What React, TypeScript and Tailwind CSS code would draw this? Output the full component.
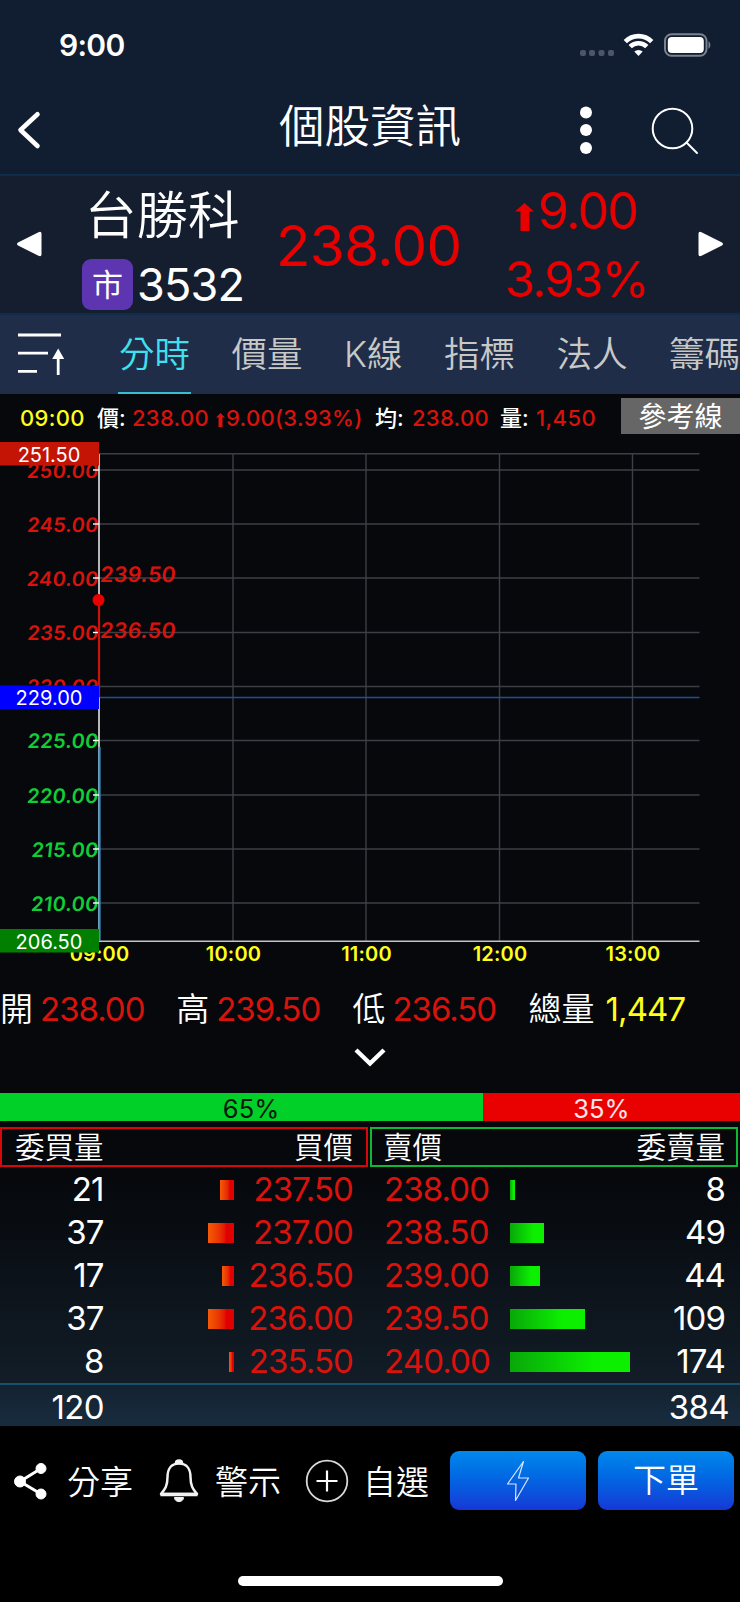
import type { ReactNode } from "react";

const FONT = "font-['Inter','Noto_Sans_CJK_TC',sans-serif]";

const tabs = ["分時", "價量", "K線", "指標", "法人", "籌碼"];

const priceTicks = [
  { label: "250.00", y: 35, up: true },
  { label: "245.00", y: 89, up: true },
  { label: "240.00", y: 143, up: true },
  { label: "235.00", y: 197.5, up: true },
  { label: "230.00", y: 251.5, up: true },
  { label: "225.00", y: 305.5, up: false },
  { label: "220.00", y: 360, up: false },
  { label: "215.00", y: 414, up: false },
  { label: "210.00", y: 468, up: false },
];

const timeTicks = [
  { label: "09:00", x: 99 },
  { label: "10:00", x: 233 },
  { label: "11:00", x: 366 },
  { label: "12:00", x: 499.5 },
  { label: "13:00", x: 632.5 },
];

const priceTags = [
  { label: "251.50", y: 7, fill: "#c41405" },
  { label: "229.00", y: 250.5, fill: "#0000ff" },
  { label: "206.50", y: 494, fill: "#007f00" },
];

const stats = [
  { label: "開", value: "238.00" },
  { label: "高", value: "239.50" },
  { label: "低", value: "236.50" },
];

const bids = [
  { qty: 21, price: "237.50", bar: 14.5 },
  { qty: 37, price: "237.00", bar: 26 },
  { qty: 17, price: "236.50", bar: 12 },
  { qty: 37, price: "236.00", bar: 26 },
  { qty: 8, price: "235.50", bar: 5.5 },
];

const asks = [
  { qty: 8, price: "238.00", bar: 5 },
  { qty: 49, price: "238.50", bar: 34 },
  { qty: 44, price: "239.00", bar: 30 },
  { qty: 109, price: "239.50", bar: 75 },
  { qty: 174, price: "240.00", bar: 120 },
];

function StatusBar() {
  return (
    <div className="flex h-[90px] items-center justify-between pl-[59px] pr-7">
      <span className="text-[30px] font-semibold leading-none tracking-[-0.7px]">9:00</span>
      <svg width="134" height="26" viewBox="0 0 134 26" fill="none">
        <g fill="#4d5666">
          <rect x="2" y="18" width="6" height="6" rx="2" />
          <rect x="11" y="18" width="6" height="6" rx="2" />
          <rect x="20.5" y="18" width="6" height="6" rx="2" />
          <rect x="30" y="18" width="6" height="6" rx="2" />
        </g>
        <g stroke="#fff" strokeWidth="4.6">
          <path d="M47.3 9.6a18.6 18.6 0 0 1 26.4 0" />
          <path d="M52.2 14.6a11.8 11.8 0 0 1 16.6 0" />
        </g>
        <path d="M60.5 24l-4.2-4.4a6.2 6.2 0 0 1 8.4 0z" fill="#fff" />
        <rect x="87" y="2.2" width="41.5" height="21.6" rx="6.5" stroke="#7b828e" strokeWidth="2" />
        <rect x="89.8" y="5" width="36" height="16" rx="4" fill="#fff" />
        <path d="M130.5 9.3c2.4.9 2.4 6.5 0 7.4z" fill="#7b828e" />
      </svg>
    </div>
  );
}

function NavBar() {
  return (
    <div className="flex h-[84px] items-center">
      <svg width="60" height="84" viewBox="0 0 60 84" fill="none" stroke="#fff" strokeWidth="4.6" strokeLinecap="round" strokeLinejoin="round">
        <path d="M37.5 24.3L20.5 40l17 16" />
      </svg>
      <h1 className="ml-[219px] mt-[-10px] w-[184px] whitespace-nowrap text-[45.5px] font-[350] leading-none">個股資訊</h1>
      <svg className="ml-auto" width="170" height="84" viewBox="0 0 170 84" fill="none">
        <g fill="#fff">
          <circle cx="16" cy="22.5" r="6" />
          <circle cx="16" cy="40" r="6" />
          <circle cx="16" cy="58" r="6" />
        </g>
        <g stroke="#fff" strokeWidth="2" strokeLinecap="round">
          <circle cx="102.5" cy="38.5" r="19.8" />
          <path d="M116.5 52.5l10.5 10.5" />
        </g>
      </svg>
    </div>
  );
}

function Quote() {
  return (
    <section className="flex h-[141px] border-y-2 border-[#0e2c4b] bg-[#141e2e]">
      <svg className="mt-[55px] ml-4 shrink-0" width="26" height="26" viewBox="0 0 26 26" fill="#fff">
        <path d="M2 11.4L22.5 1.2q3-1.2 3 1.5v20.6q0 2.7-3 1.5L2 14.6q-2-1.6 0-3.2z" />
      </svg>
      <div className="ml-10 w-[190px]">
        <div className="mt-3 ml-[3px] whitespace-nowrap text-[51.5px] font-[350] leading-[54px]">台勝科</div>
        <div className="mt-[17px] flex items-center">
          <span className="grid h-[51px] w-[51px] place-items-center rounded-[9px] bg-[#5e35b1] text-[31px] leading-none">市</span>
          <span className="ml-1 text-[45px] leading-none tracking-[-0.8px]">3532</span>
        </div>
      </div>
      <div className="ml-[4px] mt-[41px] w-[201px] whitespace-nowrap text-[56.5px] leading-[58px] tracking-[-0.6px] text-[#e80000]">238.00</div>
      <div className="ml-[28px] w-[160px] whitespace-nowrap text-[50px] text-[#e80000]">
        <div className="mt-[10px] flex h-[50px] items-center pl-[10px] leading-none">
          <svg className="mt-3 mr-1" width="19" height="28" viewBox="0 0 19 28" fill="#e80000">
            <path d="M9.5 0L19 8.5h-4.5V28h-9V8.5H0z" />
          </svg>
          <span className="tracking-[-1.6px]">9.00</span>
        </div>
        <div className="mt-[19px] text-[49px] leading-[50px] tracking-[-1.7px]">3.93%</div>
      </div>
      <svg className="mt-[55px] mr-4 ml-auto shrink-0" width="26" height="26" viewBox="0 0 26 26" fill="#fff">
        <path d="M24 11.4L3.5 1.2q-3-1.2-3 1.5v20.6q0 2.7 3 1.5L24 14.6q2-1.6 0-3.2z" />
      </svg>
    </section>
  );
}

function Tabs() {
  return (
    <nav className="flex h-[79px] items-stretch overflow-hidden bg-[#1f2d49]">
      <svg className="ml-4 mt-[14px] shrink-0" width="50" height="50" viewBox="0 0 50 50" fill="none" stroke="#fff" strokeWidth="2.8">
        <path d="M2 6h43M2 24.2h30M2 42.3h19M42.2 25v21" />
        <path d="M42.2 19.5l6 10.5h-12z" fill="#fff" stroke="none" />
      </svg>
      <div className="ml-[52px] flex shrink-0 gap-[39.5px] text-[35.5px] font-[350] text-[#c8c9c6]">
        {tabs.map((tab, i) => (
          <div
            key={tab}
            className={
              i === 0
                ? "flex items-center whitespace-nowrap border-b-2 border-[#35bfd0] px-px pt-0.5 text-[#41e0ee]"
                : "flex items-center whitespace-nowrap border-b-2 border-transparent px-px pt-0.5"
            }
          >
            {tab}
          </div>
        ))}
      </div>
    </nav>
  );
}

function InfoLine() {
  return (
    <div className="flex h-[41px] items-start overflow-hidden">
      <div className="mt-[9px] flex h-[30px] w-[621px] items-center whitespace-nowrap pl-5 text-[22px] font-medium text-[#d9120c]">
        <span className="w-[77px] tracking-[0.3px] text-[#ffff1a]">09:00</span>
        <span className="w-[35px] text-white">價:</span>
        <span className="w-[84px] tracking-[0.3px]">238.00</span>
        <svg className="mt-1 mr-px" width="9" height="14" viewBox="0 0 9 14" fill="#d9120c">
          <path d="M4.5 0L9 4.5H6.5V14h-4V4.5H0z" />
        </svg>
        <span className="w-[149px] tracking-[0.3px]">9.00(3.93%)</span>
        <span className="w-[37px] text-white">均:</span>
        <span className="w-[88px] tracking-[0.3px]">238.00</span>
        <span className="w-[36px] text-white">量:</span>
        <span className="tracking-[0.4px]">1,450</span>
      </div>
      <button className="mt-1 h-9 w-[119px] bg-[#666] text-[28px] leading-[38px] text-white">參考線</button>
    </div>
  );
}

function Chart() {
  return (
    <svg className={`block ${FONT}`} width="740" height="540" viewBox="0 0 740 540">
      <g stroke="#3c3f45" strokeWidth="1.4">
        <path d="M99 18.8H699.5" />
        {priceTicks.map((t) => (
          <path key={t.label} d={`M99 ${t.y}H699.5`} />
        ))}
        {timeTicks.slice(1).map((t) => (
          <path key={t.label} d={`M${t.x} 18.8V506`} />
        ))}
      </g>
      <path d="M99 262.5H699.5" stroke="#1f4f94" strokeWidth="1.5" />
      <path d="M99 506.2H699.5" stroke="#c4c4c4" strokeWidth="1.5" />
      <path d="M99 19V506" stroke="#f2f2f2" strokeWidth="1.5" />
      <path d="M99.5 312V506" stroke="#3f8fc4" strokeWidth="2.2" />

      <g className="text-[20px] font-semibold tracking-[0.3px]">
        {priceTicks.map((t) => (
          <text
            key={t.label}
            transform={`translate(98 ${t.y + 7.5}) skewX(-6)`}
            textAnchor="end"
            fill={t.up ? "#d9120c" : "#0fcf37"}
          >
            {t.label}
          </text>
        ))}
      </g>
      <g className="text-[20px] font-semibold tracking-[0.2px]" fill="#ffff1a">
        {timeTicks.map((t) => (
          <text key={t.label} x={t.x + 0.5} y="525.5" textAnchor="middle">
            {t.label}
          </text>
        ))}
      </g>
      {priceTicks.map((t) => (
        <path key={t.label} d={`M93 ${t.y}H99`} stroke="#fff" strokeWidth="1.4" />
      ))}

      <path d="M99 165V262.5" stroke="#c9140d" strokeWidth="2.2" />
      <circle cx="98.5" cy="165" r="6" fill="#e80000" />
      <g className="text-[21.5px] font-semibold tracking-[0.2px]" fill="#d9120c">
        <text transform="translate(99.5 146.500) skewX(-6)">239.50</text>
        <text transform="translate(99.5 202.500) skewX(-6)">236.50</text>
      </g>

      {priceTags.map((t) => (
        <g key={t.label}>
          <rect x="0" y={t.y} width="99" height="23.5" fill={t.fill} />
          <text className="text-[20px]" x="49" y={t.y + 19.5} textAnchor="middle" fill="#fff">
            {t.label}
          </text>
        </g>
      ))}
    </svg>
  );
}

function Stats() {
  return (
    <div className="h-[118px]">
      <div className="flex h-[68px] items-center whitespace-nowrap pt-0.5 text-[33px]">
        {stats.map((s) => (
          <div key={s.label} className="flex w-[176.2px] items-center">
            <span className="w-10 font-[350]">{s.label}</span>
            <span className="tracking-[-1px] text-[#d9120c]">{s.value}</span>
          </div>
        ))}
        <span className="w-[77px] font-[350]">總量</span>
        <span className="tracking-[-0.9px] text-[#ffff1a]">1,447</span>
      </div>
      <svg className="mx-auto mt-[3px] block" width="34" height="24" viewBox="0 0 34 24" fill="none" stroke="#fff" strokeWidth="4.4">
        <path d="M3 4l14 13.5L31 4" />
      </svg>
    </div>
  );
}

function RatioBar() {
  return (
    <div className="flex h-7 text-[25.5px] leading-[31px]">
      <div className="w-[483px] bg-[#00d028] pl-[19px] text-center text-[#05180a]">65%</div>
      <div className="flex-1 bg-[#e90000] pr-[20px] text-center text-white/90">35%</div>
    </div>
  );
}

function OrderBook() {
  return (
    <section>
      <div className="mt-1.5 flex h-10 gap-[2px] pr-0.5 text-[29.5px] font-[350] leading-9">
        <div className="flex w-[368px] justify-between border-2 border-[#d90808] px-[13px]">
          <span>委買量</span>
          <span>買價</span>
        </div>
        <div className="flex flex-1 justify-between border-2 border-[#10b83a] px-[11px]">
          <span>賣價</span>
          <span>委賣量</span>
        </div>
      </div>
      <div className="flex h-[216px] flex-col pt-px text-[33px] leading-none tracking-[-0.9px]">
        {bids.map((b, i) => (
          <div key={b.price} className="flex h-[43px] items-center">
            <span className="w-[103.5px] text-right">{b.qty}</span>
            <span className="flex w-[130.5px] justify-end">
              <span className="h-5 bg-linear-to-r from-[#f65a08] to-[#e00000] to-70%" style={{ width: b.bar }} />
            </span>
            <span className="w-[119px] text-right text-[#d9120c]">{b.price}</span>
            <span className="ml-[31px] w-[126px] text-[#d9120c]">{asks[i].price}</span>
            <span className="h-5 bg-linear-to-r from-[#08a808] to-[#0cf000] to-70%" style={{ width: asks[i].bar }} />
            <span className="mr-[15px] ml-auto">{asks[i].qty}</span>
          </div>
        ))}
      </div>
      <div className="flex h-[43px] items-center justify-between border-t-2 border-[#17516e] bg-linear-to-b from-[#13222f] to-[#182c3f] text-[33px] leading-none tracking-[-0.6px]">
        <span className="w-[104px] pt-1 text-right">120</span>
        <span className="pr-[11px] pt-1">384</span>
      </div>
    </section>
  );
}

function Action({ children, label, className }: { children: ReactNode; label: string; className: string }) {
  return (
    <div className={`flex items-center justify-between whitespace-nowrap ${className}`}>
      {children}
      <span className="pt-1">{label}</span>
    </div>
  );
}

function BottomBar() {
  return (
    <footer className="flex h-[176px] flex-col bg-black">
      <div className="mt-[25px] flex h-[59px] items-center pl-3 text-[33px] font-[350] leading-none">
        <Action label="分享" className="w-[121px]">
          <svg width="37" height="40" viewBox="0 0 37 40" fill="#fff" stroke="#fff">
            <path d="M29 7.5L8 20.5l21 12.5" fill="none" strokeWidth="3" />
            <circle cx="29" cy="7.5" r="5" />
            <circle cx="8" cy="20.5" r="5.5" />
            <circle cx="29" cy="33" r="5" />
          </svg>
        </Action>
        <Action label="警示" className="ml-[25px] w-[123px]">
          <svg width="42" height="44" viewBox="0 0 42 44" fill="none" stroke="#f2f2f2" strokeWidth="2.5" strokeLinejoin="round">
            <path d="M21 4.5C12.5 4.5 9.5 11 9.5 18c0 9-2.5 12-6.5 17h36c-4-5-6.5-8-6.5-17 0-7-3-13.5-11.5-13.5z" />
            <path d="M2.5 35.5h37" strokeWidth="3.5" />
            <path d="M18 4a3 2.5 0 0 1 6 0z" fill="#f2f2f2" />
            <path d="M16.5 38.5h9c0 5.5-9 5.5-9 0z" fill="#f2f2f2" strokeWidth="1" />
          </svg>
        </Action>
        <Action label="自選" className="ml-[24px] w-[124px]">
          <svg width="44" height="44" viewBox="0 0 44 44" fill="none" stroke="#d8d8d8" strokeWidth="1.8">
            <circle cx="22" cy="22" r="20.3" />
            <path d="M11.5 22h21M22 11.5v21" stroke="#fff" strokeWidth="2.2" />
          </svg>
        </Action>
        <button className="ml-[21px] grid h-[59px] w-[136px] place-items-center rounded-[9px] bg-linear-to-b from-[#0288ec] to-[#1637d6]">
          <svg width="24" height="42" viewBox="0 0 24 42" fill="none" stroke="#d7e6ff" strokeWidth="1.2" strokeLinejoin="round">
            <path d="M17.5 1.5L1.5 24H10L9.5 40.5 22.5 18h-10z" />
          </svg>
        </button>
        <button className="ml-3 h-[59px] w-[136px] rounded-[9px] bg-linear-to-b from-[#0288ec] to-[#1637d6]">下單</button>
      </div>
      <div className="mx-auto mt-[66px] h-[10px] w-[265px] rounded-full bg-white" />
    </footer>
  );
}

export default function App() {
  return (
    <div className={`w-[740px] overflow-hidden bg-[#06080c] text-white ${FONT}`}>
      <header className="bg-[#111d31]">
        <StatusBar />
        <NavBar />
      </header>
      <Quote />
      <Tabs />
      <InfoLine />
      <Chart />
      <div className="bg-linear-to-b from-[#06080c] from-45% to-[#15222e]">
        <Stats />
        <RatioBar />
        <OrderBook />
      </div>
      <BottomBar />
    </div>
  );
}
